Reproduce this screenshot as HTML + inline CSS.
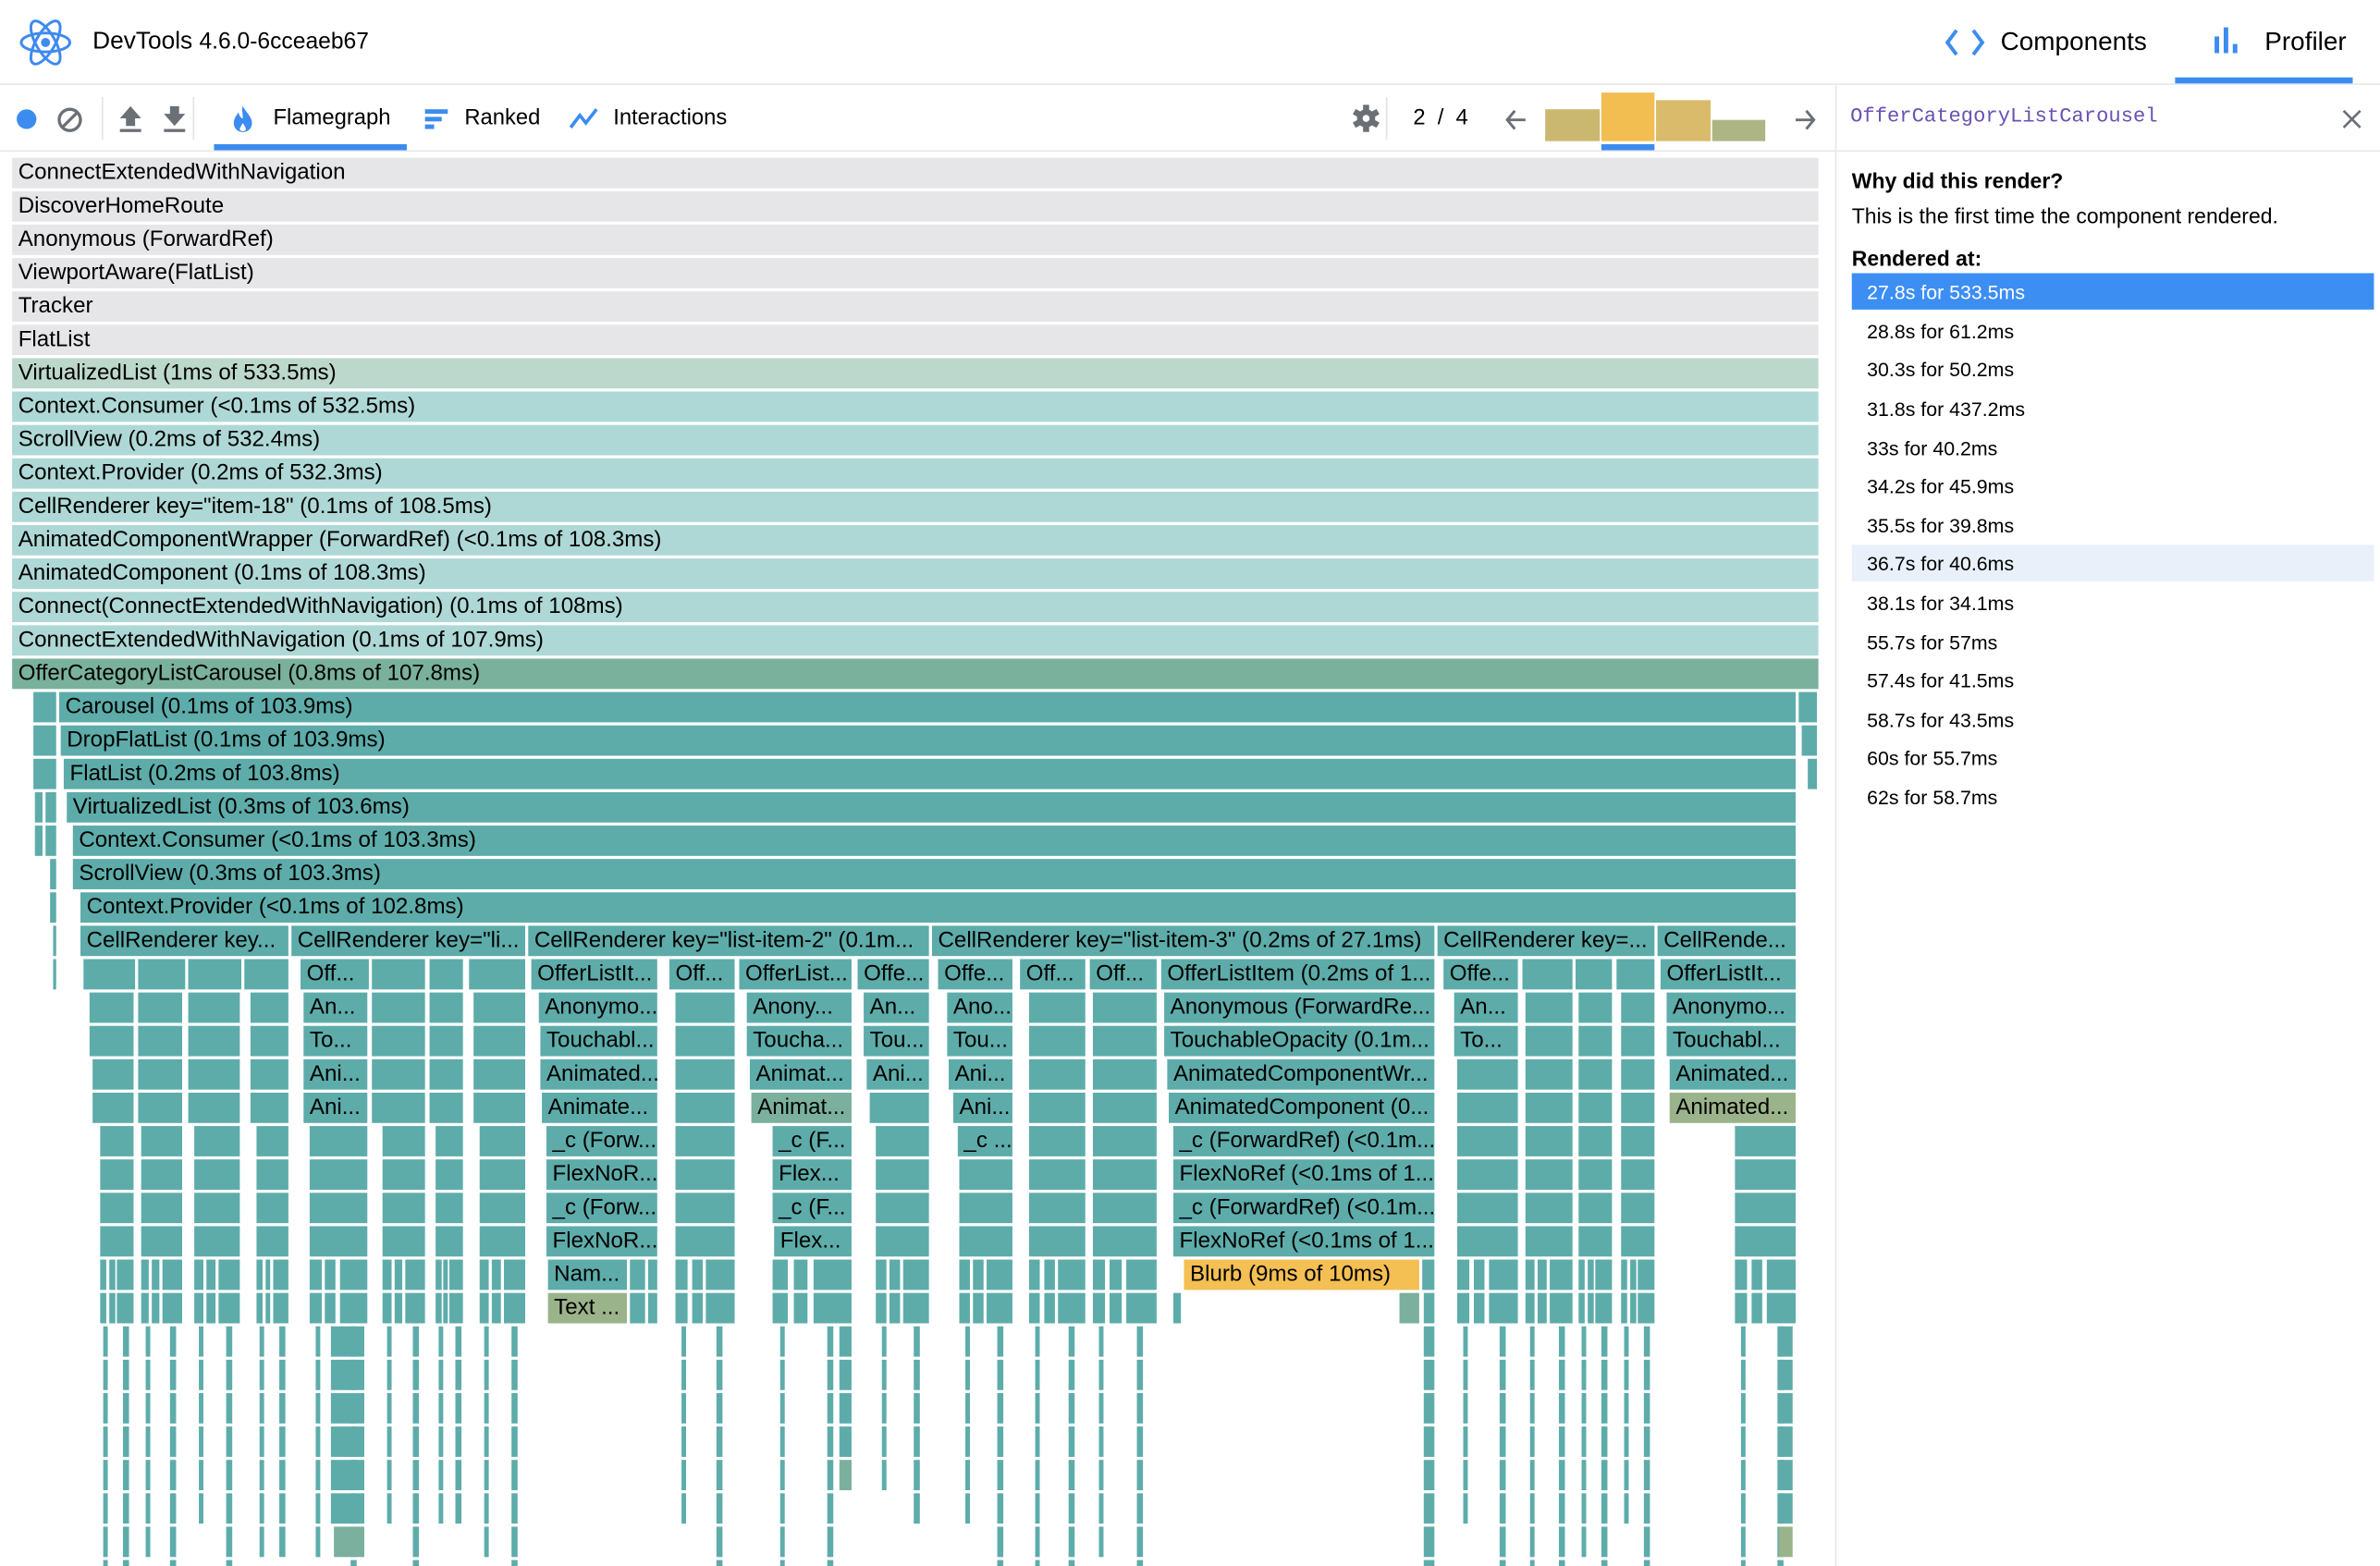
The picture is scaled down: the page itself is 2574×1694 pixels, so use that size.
<!DOCTYPE html>
<html><head><meta charset="utf-8">
<style>
html,body{margin:0;padding:0;background:#fff;overflow:hidden}
#wrap{position:absolute;left:0;top:0;width:1568px;height:1032px;transform:scale(1.6416);transform-origin:0 0;font-family:"Liberation Sans",sans-serif;color:#000;overflow:hidden}
.a{position:absolute}
.f{position:absolute;height:20px;line-height:21px;font-size:14.7px;padding-left:4px;box-sizing:border-box;white-space:nowrap;overflow:hidden;background:#5dacaa;color:#000}
.g{background:#e6e6e8}
.l{background:#aed8d6}
.li{position:absolute;left:1220px;width:344px;height:24px;line-height:25px;font-size:13px;padding-left:10px;box-sizing:border-box}
</style></head><body>
<div id="wrap">
<div id="flame" class="a" style="left:0;top:1px;width:1209px;height:1032px;overflow:hidden">
<div class="f g" style="left:8px;top:103px;width:1190px">ConnectExtendedWithNavigation</div>
<div class="f g" style="left:8px;top:125px;width:1190px">DiscoverHomeRoute</div>
<div class="f g" style="left:8px;top:147px;width:1190px">Anonymous (ForwardRef)</div>
<div class="f g" style="left:8px;top:169px;width:1190px">ViewportAware(FlatList)</div>
<div class="f g" style="left:8px;top:191px;width:1190px">Tracker</div>
<div class="f g" style="left:8px;top:213px;width:1190px">FlatList</div>
<div class="f" style="left:8px;top:235px;width:1190px;background:#bcd8cd">VirtualizedList (1ms of 533.5ms)</div>
<div class="f l" style="left:8px;top:257px;width:1190px">Context.Consumer (&lt;0.1ms of 532.5ms)</div>
<div class="f l" style="left:8px;top:279px;width:1190px">ScrollView (0.2ms of 532.4ms)</div>
<div class="f l" style="left:8px;top:301px;width:1190px">Context.Provider (0.2ms of 532.3ms)</div>
<div class="f l" style="left:8px;top:323px;width:1190px">CellRenderer key="item-18" (0.1ms of 108.5ms)</div>
<div class="f l" style="left:8px;top:345px;width:1190px">AnimatedComponentWrapper (ForwardRef) (&lt;0.1ms of 108.3ms)</div>
<div class="f l" style="left:8px;top:367px;width:1190px">AnimatedComponent (0.1ms of 108.3ms)</div>
<div class="f l" style="left:8px;top:389px;width:1190px">Connect(ConnectExtendedWithNavigation) (0.1ms of 108ms)</div>
<div class="f l" style="left:8px;top:411px;width:1190px">ConnectExtendedWithNavigation (0.1ms of 107.9ms)</div>
<div class="f" style="left:8px;top:433px;width:1190px;background:#7ab19d">OfferCategoryListCarousel (0.8ms of 107.8ms)</div>
<div class="f" style="left:39px;top:455px;width:1144px">Carousel (0.1ms of 103.9ms)</div>
<div class="f" style="left:40px;top:477px;width:1143px">DropFlatList (0.1ms of 103.9ms)</div>
<div class="f" style="left:42px;top:499px;width:1141px">FlatList (0.2ms of 103.8ms)</div>
<div class="f" style="left:44px;top:521px;width:1139px">VirtualizedList (0.3ms of 103.6ms)</div>
<div class="f" style="left:48px;top:543px;width:1135px">Context.Consumer (&lt;0.1ms of 103.3ms)</div>
<div class="f" style="left:48px;top:565px;width:1135px">ScrollView (0.3ms of 103.3ms)</div>
<div class="f" style="left:53px;top:587px;width:1130px">Context.Provider (&lt;0.1ms of 102.8ms)</div>
<div class="f" style="left:53px;top:609px;width:137px">CellRenderer key...</div>
<div class="f" style="left:192px;top:609px;width:154px">CellRenderer key="li...</div>
<div class="f" style="left:348px;top:609px;width:264px">CellRenderer key="list-item-2" (0.1m...</div>
<div class="f" style="left:614px;top:609px;width:331px">CellRenderer key="list-item-3" (0.2ms of 27.1ms)</div>
<div class="f" style="left:947px;top:609px;width:143px">CellRenderer key=...</div>
<div class="f" style="left:1092px;top:609px;width:91px">CellRende...</div>
<div class="f" style="left:198px;top:631px;width:45px">Off...</div>
<div class="f" style="left:350px;top:631px;width:83px">OfferListIt...</div>
<div class="f" style="left:441px;top:631px;width:43px">Off...</div>
<div class="f" style="left:487px;top:631px;width:74px">OfferList...</div>
<div class="f" style="left:565px;top:631px;width:47px">Offe...</div>
<div class="f" style="left:618px;top:631px;width:49px">Offe...</div>
<div class="f" style="left:672px;top:631px;width:43px">Off...</div>
<div class="f" style="left:718px;top:631px;width:44px">Off...</div>
<div class="f" style="left:765px;top:631px;width:180px">OfferListItem (0.2ms of 1...</div>
<div class="f" style="left:951px;top:631px;width:49px">Offe...</div>
<div class="f" style="left:1094px;top:631px;width:89px">OfferListIt...</div>
<div class="f" style="left:200px;top:653px;width:42px">An...</div>
<div class="f" style="left:200px;top:675px;width:42px">To...</div>
<div class="f" style="left:200px;top:697px;width:42px">Ani...</div>
<div class="f" style="left:200px;top:719px;width:42px">Ani...</div>
<div class="f" style="left:355px;top:653px;width:78px">Anonymo...</div>
<div class="f" style="left:356px;top:675px;width:77px">Touchabl...</div>
<div class="f" style="left:356px;top:697px;width:77px">Animated...</div>
<div class="f" style="left:357px;top:719px;width:76px">Animate...</div>
<div class="f" style="left:360px;top:741px;width:73px">_c (Forw...</div>
<div class="f" style="left:360px;top:763px;width:73px">FlexNoR...</div>
<div class="f" style="left:360px;top:785px;width:73px">_c (Forw...</div>
<div class="f" style="left:360px;top:807px;width:73px">FlexNoR...</div>
<div class="f" style="left:361px;top:829px;width:52px">Nam...</div>
<div class="f" style="left:361px;top:851px;width:52px;background:#9bb38a">Text ...</div>
<div class="f" style="left:492px;top:653px;width:69px">Anony...</div>
<div class="f" style="left:492px;top:675px;width:69px">Toucha...</div>
<div class="f" style="left:494px;top:697px;width:67px">Animat...</div>
<div class="f" style="left:495px;top:719px;width:66px;background:#7ab09d">Animat...</div>
<div class="f" style="left:509px;top:741px;width:52px">_c (F...</div>
<div class="f" style="left:509px;top:763px;width:52px">Flex...</div>
<div class="f" style="left:509px;top:785px;width:52px">_c (F...</div>
<div class="f" style="left:510px;top:807px;width:51px">Flex...</div>
<div class="f" style="left:569px;top:653px;width:43px">An...</div>
<div class="f" style="left:569px;top:675px;width:43px">Tou...</div>
<div class="f" style="left:571px;top:697px;width:41px">Ani...</div>
<div class="f" style="left:624px;top:653px;width:43px">Ano...</div>
<div class="f" style="left:624px;top:675px;width:43px">Tou...</div>
<div class="f" style="left:625px;top:697px;width:42px">Ani...</div>
<div class="f" style="left:628px;top:719px;width:39px">Ani...</div>
<div class="f" style="left:631px;top:741px;width:36px">_c ...</div>
<div class="f" style="left:767px;top:653px;width:178px">Anonymous (ForwardRe...</div>
<div class="f" style="left:767px;top:675px;width:178px">TouchableOpacity (0.1m...</div>
<div class="f" style="left:769px;top:697px;width:176px">AnimatedComponentWr...</div>
<div class="f" style="left:770px;top:719px;width:175px">AnimatedComponent (0...</div>
<div class="f" style="left:773px;top:741px;width:172px">_c (ForwardRef) (&lt;0.1m...</div>
<div class="f" style="left:773px;top:763px;width:172px">FlexNoRef (&lt;0.1ms of 1...</div>
<div class="f" style="left:773px;top:785px;width:172px">_c (ForwardRef) (&lt;0.1m...</div>
<div class="f" style="left:773px;top:807px;width:172px">FlexNoRef (&lt;0.1ms of 1...</div>
<div class="f" style="left:780px;top:829px;width:155px;background:#f4bf53">Blurb (9ms of 10ms)</div>
<div class="f" style="left:958px;top:653px;width:42px">An...</div>
<div class="f" style="left:958px;top:675px;width:42px">To...</div>
<div class="f" style="left:1098px;top:653px;width:85px">Anonymo...</div>
<div class="f" style="left:1098px;top:675px;width:85px">Touchabl...</div>
<div class="f" style="left:1100px;top:697px;width:83px">Animated...</div>
<div class="f" style="left:1100px;top:719px;width:83px;background:#9bb38a">Animated...</div>
</div>

<div class="a" style="left:0;top:0;width:1568px;height:55px;background:#fff;border-bottom:1px solid #e8e8e8"></div>
<svg class="a" style="left:12px;top:11px" width="36" height="34" viewBox="-18 -17 36 34">
<g fill="none" stroke="#3d8af0" stroke-width="1.8"><ellipse rx="16" ry="6.2"/><ellipse rx="16" ry="6.2" transform="rotate(60)"/><ellipse rx="16" ry="6.2" transform="rotate(120)"/></g><circle r="3" fill="#3d8af0"/></svg>
<div class="a" style="left:61px;top:19px;font-size:16px">DevTools <span style="font-size:15px">4.6.0-6cceaeb67</span></div>
<svg class="a" style="left:1281px;top:18px" width="27" height="20" viewBox="0 0 27 20"><path d="M8 2 L2 10 L8 18 M19 2 L25 10 L19 18" fill="none" stroke="#3c8cf0" stroke-width="2.4"/></svg>
<div class="a" style="left:1318px;top:18px;font-size:17px">Components</div>
<div class="a" style="left:1459px;top:24px;width:3px;height:11px;background:#3c8cf0"></div>
<div class="a" style="left:1465px;top:18px;width:3px;height:17px;background:#3c8cf0"></div>
<div class="a" style="left:1471px;top:29px;width:3px;height:6px;background:#3c8cf0"></div>
<div class="a" style="left:1492px;top:18px;font-size:17px">Profiler</div>
<div class="a" style="left:1433px;top:51px;width:117px;height:4px;background:#3c8cf0"></div>

<div class="a" style="left:0;top:56px;width:1568px;height:43px;background:#fff;border-bottom:1px solid #e8e8e8"></div>
<div class="a" style="left:11px;top:72px;width:13px;height:13px;border-radius:50%;background:#3c8cf0"></div>
<svg class="a" style="left:37px;top:70px" width="18" height="18"><circle cx="9" cy="9" r="7" fill="none" stroke="#6b6f76" stroke-width="2"/><path d="M4 14 L14 4" stroke="#6b6f76" stroke-width="2"/></svg>
<div class="a" style="left:67px;top:64px;width:1px;height:28px;background:#e4e4e4"></div>
<svg class="a" style="left:77px;top:69px" width="18" height="19"><path d="M9 1 L16 9 H12 V14 H6 V9 H2 Z" fill="#6b6f76"/><rect x="2" y="16" width="14" height="2" fill="#6b6f76"/></svg>
<svg class="a" style="left:106px;top:69px" width="18" height="19"><path d="M6 1 H12 V6 H16 L9 14 L2 6 H6 Z" fill="#6b6f76"/><rect x="2" y="16" width="14" height="2" fill="#6b6f76"/></svg>
<div class="a" style="left:127px;top:64px;width:1px;height:28px;background:#e4e4e4"></div>
<svg class="a" style="left:153px;top:69px" width="14" height="19"><path d="M7 1 C9 5 13 8 13 12 C13 16 10 18 7 18 C4 18 1 16 1 12 C1 9 3 7 4 5 C5 8 6 9 7 9 C7 6 6 3 7 1 Z" fill="#3c8cf0"/><path d="M7 12 C8 14 9 15 9 16 C9 17 8 17.5 7 17.5 C6 17.5 5 17 5 16 C5 15 6 14 7 12Z" fill="#fff"/></svg>
<div class="a" style="left:180px;top:70px;font-size:14.5px">Flamegraph</div>
<div class="a" style="left:141px;top:95px;width:127px;height:4px;background:#3c8cf0"></div>
<div class="a" style="left:280px;top:72px;width:15px;height:3px;background:#3c8cf0"></div>
<div class="a" style="left:280px;top:77px;width:11px;height:3px;background:#3c8cf0"></div>
<div class="a" style="left:280px;top:82px;width:6px;height:3px;background:#3c8cf0"></div>
<div class="a" style="left:306px;top:70px;font-size:14.5px">Ranked</div>
<svg class="a" style="left:375px;top:70px" width="20" height="16"><path d="M1 14 L7 6 L11 11 L18 2" fill="none" stroke="#3c8cf0" stroke-width="2.2"/></svg>
<div class="a" style="left:404px;top:70px;font-size:14.5px">Interactions</div>
<svg class="a" style="left:891px;top:69px" width="18" height="18" viewBox="-9 -9 18 18"><g fill="#6b6f76"><circle r="6"/><rect x="-2" y="-9" width="4" height="18"/><rect x="-2" y="-9" width="4" height="18" transform="rotate(60)"/><rect x="-2" y="-9" width="4" height="18" transform="rotate(120)"/></g><circle r="2.3" fill="#fff"/></svg>
<div class="a" style="left:913px;top:64px;width:1px;height:28px;background:#e4e4e4"></div>
<div class="a" style="left:931px;top:70px;font-size:14.5px;word-spacing:4px">2 / 4</div>
<svg class="a" style="left:991px;top:71px" width="16" height="16"><path d="M14 8 H2 M7 2 L2 8 L7 14" fill="none" stroke="#6b6f76" stroke-width="1.8"/></svg>
<div class="a" style="left:1018px;top:72px;width:36px;height:21px;background:#cbb870"></div>
<div class="a" style="left:1055px;top:61px;width:35px;height:32px;background:#f2bd51"></div>
<div class="a" style="left:1091px;top:66px;width:36px;height:27px;background:#dabb6b"></div>
<div class="a" style="left:1128px;top:79px;width:35px;height:14px;background:#aeb585"></div>
<div class="a" style="left:1055px;top:95px;width:35px;height:4px;background:#3c8cf0"></div>
<svg class="a" style="left:1181px;top:71px" width="16" height="16"><path d="M2 8 H14 M9 2 L14 8 L9 14" fill="none" stroke="#6b6f76" stroke-width="1.8"/></svg>

<div class="a" style="left:1209px;top:56px;width:1px;height:976px;background:#e6e6e6"></div>
<div class="a" style="left:1210px;top:100px;width:358px;height:932px;background:#fff"></div>
<div class="a" style="left:1210px;top:57px;width:358px;height:42px;background:#fff"></div>
<div class="a" style="left:1219px;top:70px;font-size:13.5px;font-family:'Liberation Mono',monospace;color:#6a51b2">OfferCategoryListCarousel</div>
<svg class="a" style="left:1543px;top:72px" width="13" height="13"><path d="M1 1 L12 12 M12 1 L1 12" stroke="#6b6f76" stroke-width="1.6"/></svg>
<div class="a" style="left:1220px;top:111px;font-size:14px;font-weight:bold">Why did this render?</div>
<div class="a" style="left:1220px;top:134px;font-size:14px">This is the first time the component rendered.</div>
<div class="a" style="left:1220px;top:162px;font-size:14px;font-weight:bold">Rendered at:</div>
<div class="li" style="top:180px;background:#3c8ef3;color:#fff">27.8s for 533.5ms</div>
<div class="li" style="top:206px">28.8s for 61.2ms</div>
<div class="li" style="top:231px">30.3s for 50.2ms</div>
<div class="li" style="top:257px">31.8s for 437.2ms</div>
<div class="li" style="top:283px">33s for 40.2ms</div>
<div class="li" style="top:308px">34.2s for 45.9ms</div>
<div class="li" style="top:334px">35.5s for 39.8ms</div>
<div class="li" style="top:359px;background:#e9f0fa">36.7s for 40.6ms</div>
<div class="li" style="top:385px">38.1s for 34.1ms</div>
<div class="li" style="top:411px">55.7s for 57ms</div>
<div class="li" style="top:436px">57.4s for 41.5ms</div>
<div class="li" style="top:462px">58.7s for 43.5ms</div>
<div class="li" style="top:487px">60s for 55.7ms</div>
<div class="li" style="top:513px">62s for 58.7ms</div>
</div>
<script>
(function(){
var fl=document.getElementById('flame');
function T(r){return 103+22*r;}
function b(x1,x2,r1,r2,c){for(var r=r1;r<=r2;r++){var d=document.createElement('div');d.className='a';d.style.cssText='left:'+x1+'px;top:'+T(r)+'px;width:'+Math.max(1,x2-x1)+'px;height:20px;background:'+(c||'#5dacaa');fl.appendChild(d);}}
var B=[[22,37,16,18],[23,28,19,20],[30,37,19,20],[33,37,21,22],[35,37,23,24],[1185,1197,16,16],[1187,1197,17,17],[1191,1197,18,18],
[55,89,24,24],[91,122,24,24],[124,159,24,24],[161,190,24,24],[59,88,25,26],[61,88,27,28],[91,120,25,28],[124,158,25,28],[165,190,25,28],
[66,88,29,32],[93,120,29,32],[128,158,29,32],[169,190,29,32],
[245,280,24,28],[283,305,24,28],[309,346,24,24],[312,346,25,28],[204,242,29,32],[252,280,29,32],[287,305,29,32],[316,346,29,32],
[445,484,25,32],[573,612,28,28],[577,612,29,32],
[632,667,30,32],[678,715,25,32],[720,762,25,32],
[1003,1036,24,24],[1038,1062,24,24],[1065,1090,24,24],[960,1000,27,32],[1005,1036,25,32],[1040,1062,25,32],[1068,1090,25,32],
[1143,1183,29,32],[937,945,33,33],[415,425,33,33],[427,433,33,33]];
B.forEach(function(a){b(a[0],a[1],a[2],a[3]);});
var C=[[66,88,42],[93,120,42],[128,158,42],[169,190,41],[204,242,42],[252,280,42],[287,305,40],[316,346,42],[445,484,42],[509,561,42],[577,612,40],[632,667,42],[678,715,42],[720,762,42],[960,1000,42],[1005,1036,42],[1040,1062,42],[1068,1090,42],[1143,1183,42]];
C.forEach(function(c,i){var a=c[0],e=c[1],w=e-a;
 b(a,a+Math.round(w*.2),33,34);b(a+Math.round(w*.27),a+Math.round(w*.45),33,34);b(a+Math.round(w*.52),e,33,34);
 b(a+Math.round(w*.1),a+Math.round(w*.1)+3,35,c[2]-(i%3));
 b(a+Math.round(w*.7),a+Math.round(w*.7)+4,35,c[2]);
});
b(218,240,35,40);b(220,240,41,41,'#7ab09d');
b(553,561,35,38);b(553,561,39,39,'#7ab09d');
b(415,425,34,34);b(427,433,34,34);
b(773,778,34,34);b(922,935,34,34,'#7ab09d');b(938,945,34,42);
b(1172,1181,35,40);b(1172,1181,41,41,'#9bb38a');
})();
</script>
</body></html>
